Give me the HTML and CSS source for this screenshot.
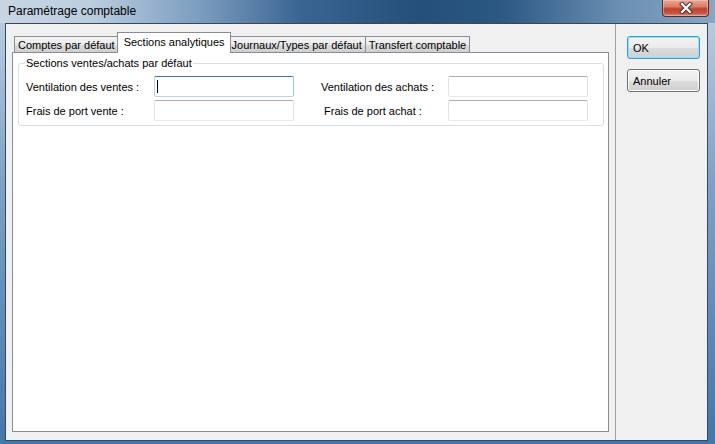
FILE: index.html
```html
<!DOCTYPE html>
<html lang="fr">
<head>
  <meta charset="UTF-8" />
  <title>Paramétrage comptable</title>
  <link rel="stylesheet" href="styles.css">
</head>
<body>
  <div class="window">
    <div class="titlebar">
      <span class="title">Paramétrage comptable</span>
      <div class="close">
        <svg width="16" height="12" viewBox="0 0 16 12">
          <path d="M4 2 L12 10 M12 2 L4 10" stroke="#3b3b3b" stroke-width="4.2" stroke-linecap="square"/>
          <path d="M4 2 L12 10 M12 2 L4 10" stroke="#fff" stroke-width="2.2" stroke-linecap="square"/>
        </svg>
      </div>
    </div>

    <div class="client">
      <div class="main">
        <div class="tabs">
          <div class="tab">Comptes par défaut</div>
          <div class="tab active">Sections analytiques</div>
          <div class="tab">Journaux/Types par défaut</div>
          <div class="tab">Transfert comptable</div>
        </div>
        <div class="page">
          <fieldset class="group">
            <legend>Sections ventes/achats par défaut</legend>
            <div class="form-grid">
              <label>Ventilation des ventes :</label>
              <div class="field focus"><span class="caret"></span></div>
              <label class="right">Ventilation des achats :</label>
              <div class="field"></div>

              <label>Frais de port vente :</label>
              <div class="field"></div>
              <label class="right indent">Frais de port achat :</label>
              <div class="field"></div>
            </div>
          </fieldset>
        </div>
      </div>

      <div class="side">
        <button class="btn default">OK</button>
        <button class="btn">Annuler</button>
      </div>
    </div>
  </div>
</body>
</html>
```

FILE: styles.css
```css
* {
  box-sizing: border-box;
}
body {
  margin: 0;
  font-family: "Liberation Sans", Arial, sans-serif;
  font-size: 11px;
  color: #000;
  background: #fff;
}
.window {
  width: 715px;
  height: 444px;
  display: flex;
  flex-direction: column;
  padding: 0 7px 3px 5px;
  background-color: #3f72a5;
  background-image:
    linear-gradient(to right, #c7d6e5 0, #bccde0 90px, #7b9dbf 200px, #3a6592 300px, #244f7b 420px, #2b5783 500px, #6a8fb2 620px, #8aa6c1 715px),
    linear-gradient(to bottom, #b9cbdd 20px, #7fa2c4 180px, #4277aa 444px);
  background-size: 100% 23px, 100% 100%;
  background-repeat: no-repeat;
}
.titlebar {
  height: 23px;
  display: flex;
  justify-content: space-between;
  align-items: flex-start;
  padding-left: 3px;
}
.title {
  font-size: 12px;
  line-height: 23px;
  color: #000;
}
.close {
  width: 47px;
  height: 17px;
  margin-right: -1px;
  display: flex;
  align-items: center;
  justify-content: center;
  border: 1px solid #5b2a23;
  border-top: none;
  border-radius: 0 0 4px 4px;
  background: linear-gradient(to bottom, #e9a794 0, #d8806a 40%, #c0432b 55%, #c9503a 80%, #dc8a72 100%);
  box-shadow: inset 0 0 0 1px rgba(255, 210, 200, 0.45);
}
.client {
  flex: 1;
  display: flex;
  border: 1px solid #34495f;
  background: #f0f0f0;
}
.main {
  width: 610px;
  display: flex;
  flex-direction: column;
  padding: 8px 6px 8px 6px;
  border-right: 1px solid #a0a0a0;
}
.tabs {
  display: flex;
  height: 20px;
  padding-left: 2px;
}
.tab {
  margin-top: 4px;
  padding: 2px 3px 0 3px;
  border: 1px solid #898c95;
  border-bottom: none;
  border-left: none;
  background: linear-gradient(to bottom, #f3f3f3, #ebebeb 50%, #dddddd 51%, #cfcfcf);
  white-space: nowrap;
}
.tab:first-child {
  border-left: 1px solid #898c95;
}
.tab.active {
  position: relative;
  z-index: 1;
  margin: 0 -2px 0 -2px;
  height: 21px;
  padding: 3px 5px 0 6px;
  border-left: 1px solid #898c95;
  background: #fff;
}
.page {
  flex: 1;
  border: 1px solid #898c95;
  background: #fff;
  padding: 4px 4px 0 5px;
}
.group {
  margin: 0;
  padding: 6px 6px 4px 6px;
  border: 1px solid #d5dfe5;
  border-radius: 3px;
}
.group legend {
  padding: 0 1px;
  line-height: 13px;
}
.form-grid {
  display: grid;
  grid-template-columns: 129px 140px 154px 140px;
  grid-auto-rows: 21px;
  row-gap: 3px;
  align-items: center;
}
.form-grid label {
  padding-left: 1px;
}
.form-grid label.right {
  padding-left: 27px;
}
.form-grid label.indent {
  padding-left: 30px;
}
.field {
  height: 21px;
  border: 1px solid;
  border-color: #abadb3 #dbdfe6 #e3e9ef #e2e3ea;
  border-radius: 2px;
  background: #fff;
}
.field.focus {
  border-color: #3d7bad #a4c9e3 #b7d9ed #b5cfe7;
  padding: 3px 0 0 2px;
}
.caret {
  display: block;
  width: 1px;
  height: 13px;
  background: #000;
}
.side {
  flex: 1;
  display: flex;
  flex-direction: column;
  align-items: flex-start;
  gap: 10px;
  padding: 12px 0 0 11px;
}
.btn {
  width: 73px;
  height: 23px;
  padding: 0 0 0 5px;
  text-align: left;
  font-family: "Liberation Sans", Arial, sans-serif;
  font-size: 11px;
  color: #000;
  border: 1px solid #707070;
  border-radius: 3px;
  background: linear-gradient(to bottom, #f2f2f2, #ebebeb 50%, #dddddd 51%, #cfcfcf);
  box-shadow: inset 0 0 0 1px #fcfcfc;
}
.btn.default {
  border-color: #3399dd;
  box-shadow: inset 0 0 0 1px #8ee4f9;
}
```
